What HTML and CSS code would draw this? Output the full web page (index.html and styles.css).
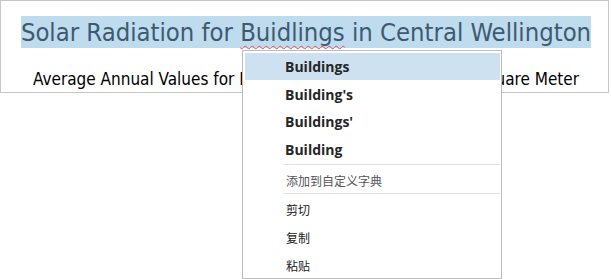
FILE: index.html
```html
<!DOCTYPE HTML>
<html>
	<head>
		<title>Solar Radiation</title>
		<link rel="stylesheet" href="styles.css">
	</head>

	<body>
		<div id="page">
			<div class="pannello">
				<div class="titolo"><span class="selezione">Solar Radiation for <span class="errore">Buidlings</span> in Central Wellington</span></div>
				<div class="sottotitolo">Average Annual Values for Rooftops in Kilowatt Hours per Square Meter</div>
			</div>

			<!-- menu contestuale del controllo ortografico -->
			<div class="menu">
				<div class="voce suggerimento attiva">Buildings</div>
				<div class="voce suggerimento">Building's</div>
				<div class="voce suggerimento">Buildings'</div>
				<div class="voce suggerimento">Building</div>
				<div class="separatore"></div>
				<div class="voce cinese grigio">添加到自定义字典</div>
				<div class="separatore"></div>
				<div class="voce cinese">剪切</div>
				<div class="voce cinese">复制</div>
				<div class="voce cinese">粘贴</div>
			</div>
		</div>
	</body>
</html>
```

FILE: styles.css
```css
body {
	margin: 0;
	background-color: #ffffff;
}

#page {
	position: relative;
	width: 611px;
	height: 279px;
}

.pannello {
	width: 609px;
	height: 93px;
	box-sizing: border-box;
	border: 1px solid #c6c6c6;
	padding-top: 15px;
	padding-left: 3px;
	text-align: center;
}

.titolo {
	height: 31px;
	line-height: 32px;
	font-family: "DejaVu Sans Condensed", "Liberation Sans", sans-serif;
	font-size: 25.4px;
	color: #3d5a71;
}

.selezione {
	background-color: #bfdbee;
	padding: 1px 0;
}

.errore {
	text-decoration: underline wavy #e0505a;
	text-decoration-thickness: 1px;
	text-underline-offset: 4px;
	text-decoration-skip-ink: none;
}

.sottotitolo {
	margin-top: 22px;
	line-height: 20px;
	font-family: "DejaVu Sans Condensed", "Liberation Sans", sans-serif;
	font-size: 17px;
	color: #000000;
}

.menu {
	position: absolute;
	left: 242px;
	top: 50px;
	width: 260px;
	height: 229px;
	box-sizing: border-box;
	border: 1px solid #bdbdbd;
	background-color: #ffffff;
	padding: 2px 1px 0 2px;
	overflow: hidden;
}

.voce {
	padding-left: 40px;
	color: #222222;
}

.suggerimento {
	height: 27.7px;
	line-height: 27.7px;
	font-family: "Open Sans", "Noto Sans", sans-serif;
	font-weight: bold;
	font-size: 14px;
	color: #262626;
}

.attiva {
	height: 26.7px;
	margin-bottom: 1px;
	background-color: #cee1f1;
}

.cinese {
	height: 28px;
	box-sizing: border-box;
	padding-top: 4px;
	line-height: 24px;
	font-family: "Noto Sans CJK SC", sans-serif;
	font-size: 12px;
	padding-left: 41px;
}

.grigio {
	color: #555555;
}

.separatore {
	height: 1px;
	margin-left: 38px;
	background-color: #e2e2e2;
}
```
